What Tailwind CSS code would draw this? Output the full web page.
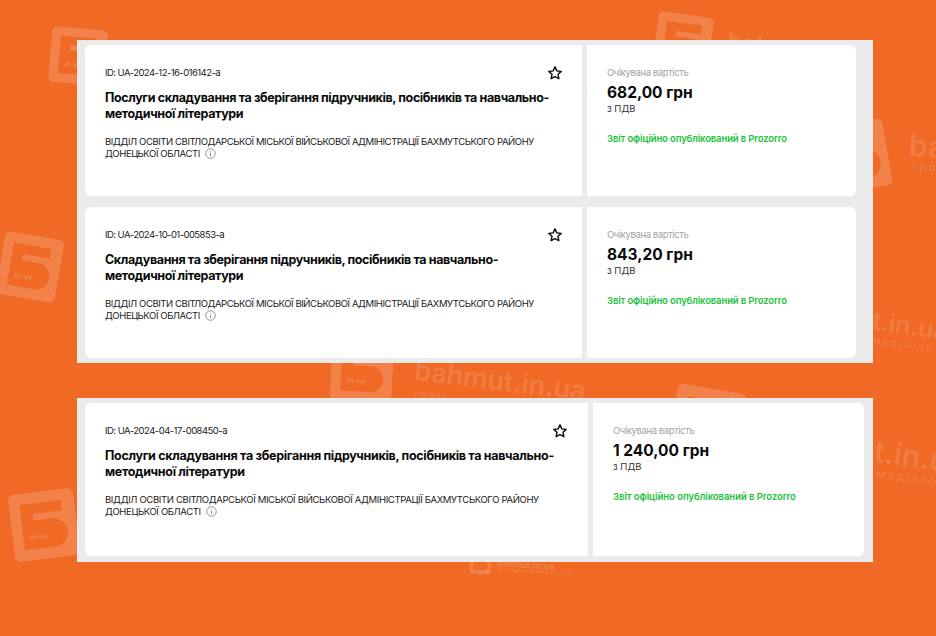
<!DOCTYPE html>
<html lang="uk">
<head>
    <meta charset="UTF-8">
    <title>Prozorro</title>
    <script src="https://cdn.jsdelivr.net/npm/@tailwindcss/browser@4"></script>
</head>
<body class="relative w-[936px] h-[636px] overflow-hidden bg-[#f06925] font-['Inter','Liberation_Sans',sans-serif]">
    <svg class="hidden">
        <symbol id="logo" viewBox="0 0 60 60" preserveAspectRatio="none">
            <path fill="#fff" fill-opacity="0.17" fill-rule="evenodd" d="M6 0H54a6 6 0 0 1 6 6V54a6 6 0 0 1-6 6H6a6 6 0 0 1-6-6V6a6 6 0 0 1 6-6ZM10 10V50H38a13 13 0 0 0 13-13V38a13 13 0 0 0-13-13H21V19H48V10Z"/>
            <text x="16" y="42" font-size="7" font-weight="600" fill="#fff" fill-opacity="0.22">in-ua</text>
        </symbol>
        <symbol id="star" viewBox="0 0 24 24">
            <path fill="none" stroke="#111" stroke-width="2.200" stroke-linejoin="round" d="M12 2.800l2.800 6 6.500.8-4.800 4.400 1.300 6.500-5.800-3.200-5.800 3.200 1.300-6.500L2.700 9.600l6.500-.8z"/>
        </symbol>
    </svg>

    <!-- watermark -->
    <div class="absolute left-[50px] top-[28px] w-[56px] h-[56px] rotate-[5deg]"><svg class="w-full h-full"><use href="#logo"/></svg></div>
    <div class="absolute left-[0px] top-[235px] w-[60px] h-[64px] rotate-[10deg]"><svg class="w-full h-full"><use href="#logo"/></svg></div>
    <div class="absolute left-[11px] top-[491px] w-[66px] h-[68px] rotate-[-7deg]"><svg class="w-full h-full"><use href="#logo"/></svg></div>
    <div class="absolute left-[655px] top-[14px] w-[56px] h-[56px] rotate-[8deg]"><svg class="w-full h-full"><use href="#logo"/></svg></div>
    <div class="absolute left-[830px] top-[122px] w-[58px] h-[68px] rotate-[-10deg]"><svg class="w-full h-full"><use href="#logo"/></svg></div>
    <div class="absolute left-[331px] top-[340px] w-[62px] h-[62px] rotate-[3deg]"><svg class="w-full h-full"><use href="#logo"/></svg></div>
    <div class="absolute left-[672px] top-[388px] w-[70px] h-[70px] rotate-[10deg]"><svg class="w-full h-full"><use href="#logo"/></svg></div>
    <div class="absolute left-[470px] top-[552px] w-[21px] h-[22px] rotate-[3deg]"><svg class="w-full h-full"><use href="#logo"/></svg></div>

    <span class="absolute left-[727px] top-[26px] text-[24px] font-semibold text-white/15 rotate-[8deg]">bah</span>
    <span class="absolute left-[909px] top-[124px] text-[30px] font-semibold text-white/15 rotate-[3deg]">ba</span>
    <span class="absolute left-[912px] top-[158px] text-[12px] tracking-[2px] text-white/15 rotate-[3deg]">гро</span>
    <span class="absolute left-[414px] top-[367px] text-[27px] font-semibold leading-none text-white/15 rotate-[7deg]">bahmut.in.ua</span>
    <span class="absolute left-[413px] top-[387px] text-[11px] tracking-[2px] text-white/15 rotate-[6deg]">гром</span>
    <span class="absolute left-[872px] top-[314px] text-[25px] font-semibold leading-none text-white/15 rotate-[8deg]">t.in.ua</span>
    <span class="absolute left-[873px] top-[340px] text-[10px] tracking-[2px] leading-none text-white/15 rotate-[8deg] whitespace-nowrap">медіапортал</span>
    <span class="absolute left-[874px] top-[442px] text-[30px] font-semibold leading-none text-white/15 rotate-[8deg]">t.in.ua</span>
    <span class="absolute left-[876px] top-[474px] text-[12px] tracking-[2px] leading-none text-white/15 rotate-[8deg] whitespace-nowrap">медіапортал</span>
    <span class="absolute left-[497px] top-[560px] text-[9px] font-semibold leading-none text-white/20 rotate-[3deg]">bahmut.in.ua</span>
    <span class="absolute left-[497px] top-[569px] text-[5px] tracking-[0.5px] leading-none text-white/20 rotate-[3deg] whitespace-nowrap">громадський медіапортал</span>

    <div class="relative pt-[40px] pl-[77px] flex flex-col gap-[35px]">
        <div class="w-[796px] h-[323px] bg-[#ebebeb] pt-[5px] pl-[8px] flex flex-col gap-[11px]">
            <div class="flex gap-[5px] h-[151px]">
                <div class="relative w-[497px] bg-white rounded-l-[6px] pl-[20px] pt-[22px]">
                    <p class="text-[9.500px] leading-[12px] tracking-[-0.55px] text-[#1a1a1a]">ID: UA-2024-12-16-016142-a</p>
                    <svg class="absolute left-[462px] top-[20px] w-[16px] h-[16px]"><use href="#star"/></svg>
                    <h3 class="mt-[11px] w-[460px] text-[12.500px] leading-[16px] font-bold tracking-[-0.38px] text-[#0a0a0a]">Послуги складування та зберігання підручників, посібників та навчально-методичної літератури</h3>
                    <p class="mt-[14px] w-[450px] text-[9.500px] leading-[12px] tracking-[-0.41px] text-[#1a1a1a]">ВІДДІЛ ОСВІТИ СВІТЛОДАРСЬКОЇ МІСЬКОЇ ВІЙСЬКОВОЇ АДМІНІСТРАЦІЇ БАХМУТСЬКОГО РАЙОНУ ДОНЕЦЬКОЇ ОБЛАСТІ <svg class="inline-block ml-[3px] w-[11px] h-[11px] align-[-2px]" viewBox="0 0 12 12" fill="none" stroke="#8a8a8a"><circle cx="6" cy="6" r="5.200"/><path d="M6 5.300V9M6 3V4"/></svg></p>
                </div>
                <div class="w-[269px] bg-white rounded-r-[6px] pl-[20px] pt-[22px]">
                    <p class="text-[9.500px] leading-[12px] tracking-[-0.4px] text-[#a3a3a3]">Очікувана вартість</p>
                    <p class="mt-[4px] text-[15.500px] leading-[20px] font-bold text-[#0a0a0a]">682,00 грн</p>
                    <p class="text-[9.500px] leading-[12px] text-[#333]">з ПДВ</p>
                    <p class="mt-[18px] text-[9.500px] leading-[12px] font-semibold tracking-[-0.13px] text-[#22c23c]">Звіт офіційно опублікований в Prozorro</p>
                </div>
            </div>
            <div class="flex gap-[5px] h-[151px]">
                <div class="relative w-[497px] bg-white rounded-l-[6px] pl-[20px] pt-[22px]">
                    <p class="text-[9.500px] leading-[12px] tracking-[-0.55px] text-[#1a1a1a]">ID: UA-2024-10-01-005853-a</p>
                    <svg class="absolute left-[462px] top-[20px] w-[16px] h-[16px]"><use href="#star"/></svg>
                    <h3 class="mt-[11px] w-[420px] text-[12.500px] leading-[16px] font-bold tracking-[-0.38px] text-[#0a0a0a]">Складування та зберігання підручників, посібників та навчально-методичної літератури</h3>
                    <p class="mt-[14px] w-[450px] text-[9.500px] leading-[12px] tracking-[-0.41px] text-[#1a1a1a]">ВІДДІЛ ОСВІТИ СВІТЛОДАРСЬКОЇ МІСЬКОЇ ВІЙСЬКОВОЇ АДМІНІСТРАЦІЇ БАХМУТСЬКОГО РАЙОНУ ДОНЕЦЬКОЇ ОБЛАСТІ <svg class="inline-block ml-[3px] w-[11px] h-[11px] align-[-2px]" viewBox="0 0 12 12" fill="none" stroke="#8a8a8a"><circle cx="6" cy="6" r="5.200"/><path d="M6 5.300V9M6 3V4"/></svg></p>
                </div>
                <div class="w-[269px] bg-white rounded-r-[6px] pl-[20px] pt-[22px]">
                    <p class="text-[9.500px] leading-[12px] tracking-[-0.4px] text-[#a3a3a3]">Очікувана вартість</p>
                    <p class="mt-[4px] text-[15.500px] leading-[20px] font-bold text-[#0a0a0a]">843,20 грн</p>
                    <p class="text-[9.500px] leading-[12px] text-[#333]">з ПДВ</p>
                    <p class="mt-[18px] text-[9.500px] leading-[12px] font-semibold tracking-[-0.13px] text-[#22c23c]">Звіт офіційно опублікований в Prozorro</p>
                </div>
            </div>
        </div>
        <div class="w-[796px] h-[164px] bg-[#ebebeb] pt-[5px] pl-[8px]">
            <div class="flex gap-[5px] h-[153px]">
                <div class="relative w-[503px] bg-white rounded-l-[6px] pl-[20px] pt-[22px]">
                    <p class="text-[9.500px] leading-[12px] tracking-[-0.52px] text-[#1a1a1a]">ID: UA-2024-04-17-008450-a</p>
                    <svg class="absolute left-[467px] top-[20px] w-[16px] h-[16px]"><use href="#star"/></svg>
                    <h3 class="mt-[11px] w-[460px] text-[12.500px] leading-[16px] font-bold tracking-[-0.31px] text-[#0a0a0a]">Послуги складування та зберігання підручників, посібників та навчально-методичної літератури</h3>
                    <p class="mt-[14px] w-[450px] text-[9.500px] leading-[12px] tracking-[-0.35px] text-[#1a1a1a]">ВІДДІЛ ОСВІТИ СВІТЛОДАРСЬКОЇ МІСЬКОЇ ВІЙСЬКОВОЇ АДМІНІСТРАЦІЇ БАХМУТСЬКОГО РАЙОНУ ДОНЕЦЬКОЇ ОБЛАСТІ <svg class="inline-block ml-[3px] w-[11px] h-[11px] align-[-2px]" viewBox="0 0 12 12" fill="none" stroke="#8a8a8a"><circle cx="6" cy="6" r="5.200"/><path d="M6 5.300V9M6 3V4"/></svg></p>
                </div>
                <div class="w-[271px] bg-white rounded-r-[6px] pl-[20px] pt-[22px]">
                    <p class="text-[9.500px] leading-[12px] tracking-[-0.4px] text-[#a3a3a3]">Очікувана вартість</p>
                    <p class="mt-[4px] text-[15.500px] leading-[20px] font-bold text-[#0a0a0a]">1 240,00 грн</p>
                    <p class="text-[9.500px] leading-[12px] text-[#333]">з ПДВ</p>
                    <p class="mt-[18px] text-[9.500px] leading-[12px] font-semibold tracking-[-0.05px] text-[#22c23c]">Звіт офіційно опублікований в Prozorro</p>
                </div>
            </div>
        </div>
    </div>
</body>
</html>
